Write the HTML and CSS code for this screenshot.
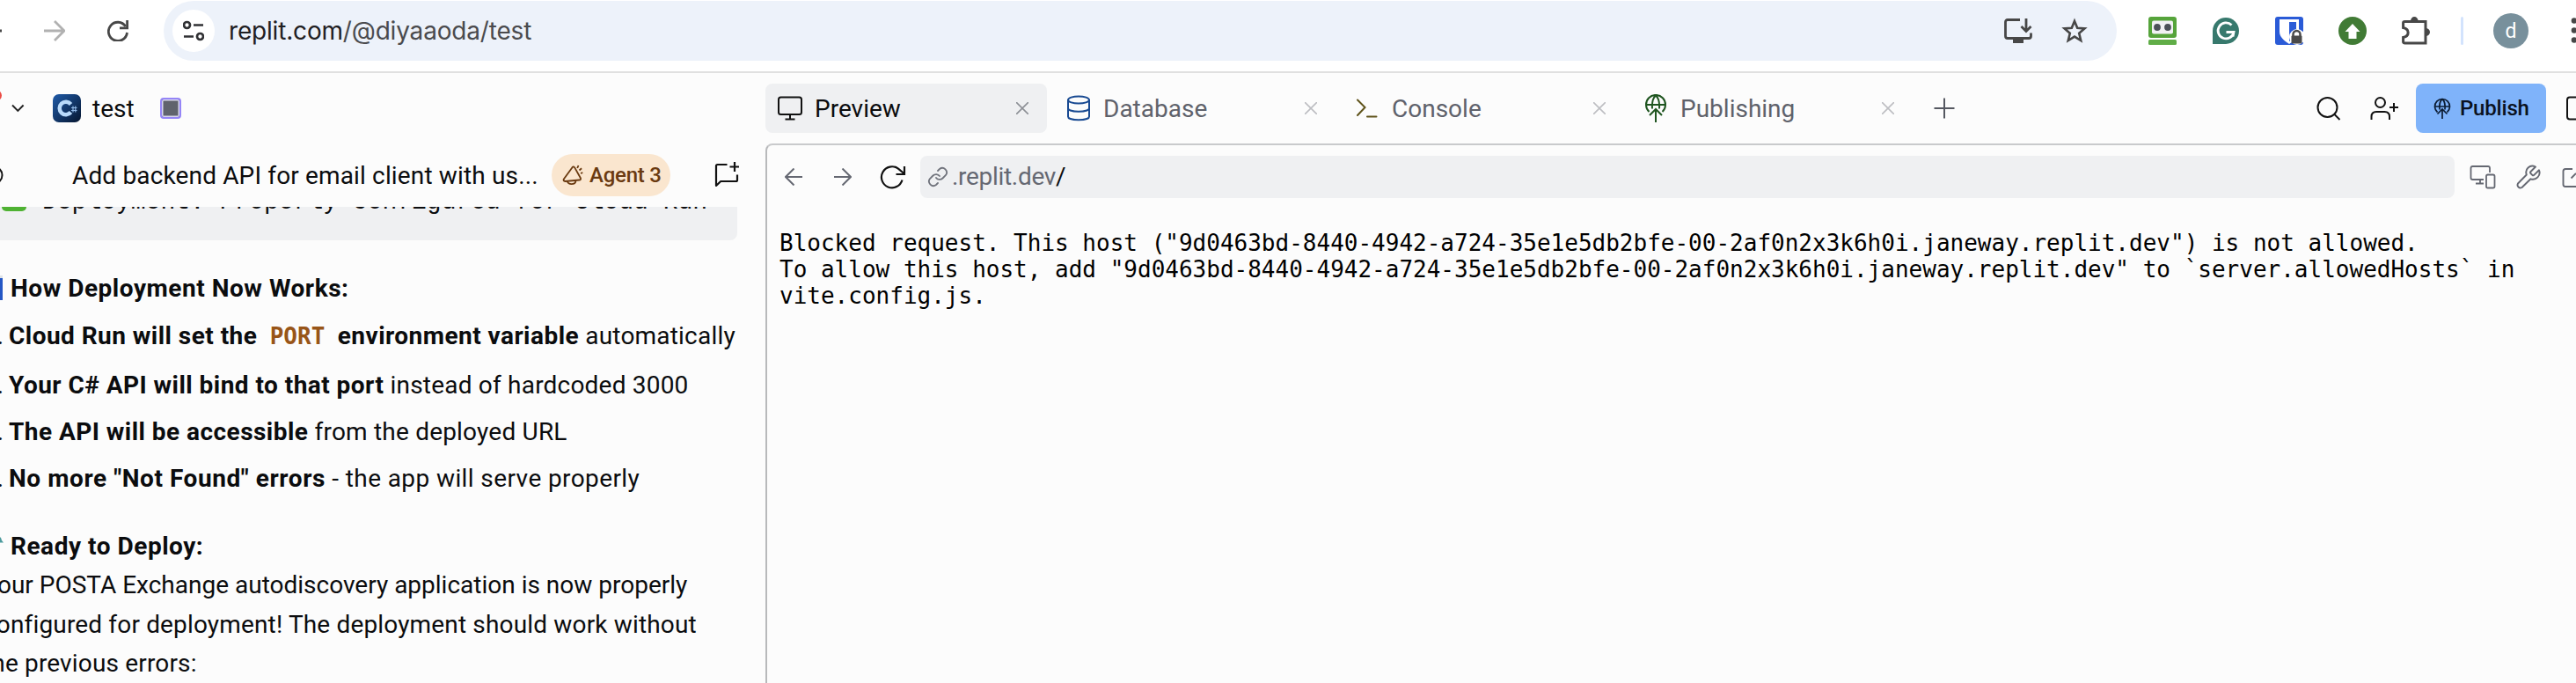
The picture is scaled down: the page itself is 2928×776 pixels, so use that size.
FILE: index.html
```html
<!DOCTYPE html>
<html lang="en">
<head>
<meta charset="utf-8">
<title>test - Replit</title>
<link rel="stylesheet" href="styles.css">
</head>
<body>
<header class="browser">
  <svg class="back-stub" width="3" height="24" viewBox="0 0 3 24"><path d="M0 12h2" stroke="#474747" stroke-width="3"/></svg>
  <svg class="forward" width="24" height="24" viewBox="0 0 24 24"><path d="M0 12h22M12 1l11 11-11 11" fill="none" stroke="#b1b1b1" stroke-width="2.8"/></svg>
  <svg class="reload" width="24" height="24" viewBox="0 0 24 24"><path d="M20.8 7A10.600 10.600 0 1 0 22.500 14" fill="none" stroke="#474747" stroke-width="2.8"/><path d="M22.600 0v8.800H14" fill="none" stroke="#474747" stroke-width="2.800"/></svg>
  <div class="omnibox">
    <span class="site-info"><svg width="24" height="24" viewBox="0 0 24 24" fill="none" stroke="#303134" stroke-width="2.7"><circle cx="4.500" cy="5.500" r="3.500"/><path d="M12 5.500h11M1 18.500h11"/><circle cx="19.500" cy="18.500" r="3.500"/></svg></span>
    <span class="address"><b>replit.com</b>/@diyaaoda/test</span>
    <svg class="install" width="32" height="28" viewBox="0 0 32 28" fill="none" stroke="#474747" stroke-width="2.800"><path d="M18 1.500H4Q1.500 1.500 1.500 4V20Q1.500 22.500 4 22.500H28Q30.500 22.500 30.500 20V16.500"/><path d="M25 0v14M19.500 9l5.500 5.500L30.500 9"/><path d="M10 22h12v6H10z" fill="#474747" stroke="none"/></svg>
    <svg width="30" height="30" viewBox="0 0 30 30"><path d="M15 4l3.200 7.700 8.300.7-6.300 5.400 2 8.200-7.200-4.400L7.800 26l2-8.200-6.300-5.400 8.300-.7z" fill="none" stroke="#474747" stroke-width="2.600"/></svg>
  </div>
  <div class="extensions">
    <svg width="32" height="32" viewBox="0 0 32 32"><rect width="32" height="24" rx="3" fill="#56a43b"/><rect x="4" y="4.500" width="24" height="15" rx="2" fill="#f1f1f4"/><circle cx="10" cy="12" r="3.900" fill="#4b5058"/><circle cx="22" cy="12" r="3.900" fill="#4b5058"/><rect y="26" width="32" height="6" rx="1.500" fill="#60ad47"/></svg>
    <svg width="32" height="32" viewBox="0 0 32 32"><path d="M16 1a15 15 0 1 1 0 30H1V16A15 15 0 0 1 16 1z" fill="#37796d"/><path d="M22.500 9.500A9 9 0 1 0 25 17.500H16.500M25 17.500l-1 5" fill="none" stroke="#fff" stroke-width="2.800"/></svg>
    <svg width="32" height="32" viewBox="0 0 32 32"><rect width="32" height="32" rx="3" fill="#2a5bd7"/><path d="M5 3h22v14c0 6-5 10-11 14C10 27 5 23 5 17z" fill="#fff"/><path d="M16 6h8v15c-2 3-5 5-8 7z" fill="#2a5bd7"/><circle cx="25" cy="23" r="9" fill="#fff"/><path d="M20.500 22v-2a4 4 0 0 1 8 0v2" fill="none" stroke="#4a4a4a" stroke-width="2.500"/><rect x="18.500" y="21.500" width="12" height="9" rx="1" fill="#4a4a4a"/></svg>
    <svg width="32" height="32" viewBox="0 0 32 32"><circle cx="16" cy="16" r="16" fill="#417b35"/><path d="M16 8l8.500 9H20.500v8h-9v-8h-4z" fill="#fff"/></svg>
    <svg width="32" height="34" viewBox="0 0 32 34"><path d="M3.500 6.500H27V31H3.500Q1.600 31 1.600 29.500V24.500C9 23 9 15 1.600 13.500V8Q1.600 6.500 3.500 6.500z" fill="none" stroke="#474747" stroke-width="3"/><path d="M10 6a4.300 5 0 0 1 8.600 0zM27 14a5 4.500 0 0 1 0 9z" fill="#474747"/></svg>
  </div>
  <span class="divider"></span>
  <span class="avatar">d</span>
  <svg class="more" width="6" height="30" viewBox="0 0 6 30" fill="#474747"><circle cx="4" cy="3.500" r="3.300"/><circle cx="4" cy="14.500" r="3.300"/><circle cx="4" cy="25.500" r="3.300"/></svg>
</header>

<div class="workspace">
  <section class="agent">
    <div class="project">
      <svg width="28" height="40" viewBox="0 0 28 40"><circle cx="-4" cy="5.500" r="6" fill="#eb4b44"/><path d="M14 16.500l6.300 6.500 6.300-6.500" fill="none" stroke="#222" stroke-width="1.900"/></svg>
      <svg class="csharp" width="32" height="32" viewBox="0 0 32 32"><defs><linearGradient id="cs" x1="0" y1="0" x2="1" y2="1"><stop stop-color="#1f5ba9"/><stop offset="1" stop-color="#06162f"/></linearGradient></defs><rect width="32" height="32" rx="7" fill="url(#cs)"/><path d="M20.500 11.500a7.200 7.200 0 1 0 0 9" fill="none" stroke="#b9dafb" stroke-width="4.500"/><path d="M23 13.500v7M25.800 13.500v7M21 15.500h6.500M21 18.500h6.500" stroke="#8fb9e8" stroke-width="1.200"/></svg>
      <span class="project-name">test</span>
      <span class="run-state"></span>
    </div>
    <div class="thread">
      <svg width="4" height="24" viewBox="0 0 4 24"><circle cx="-7" cy="12" r="9.500" fill="none" stroke="#111" stroke-width="2"/></svg>
      <span class="thread-title">Add backend API for email client with us...</span>
      <span class="badge"><svg width="24" height="24" viewBox="0 0 24 24" fill="none" stroke="#6a3a10" stroke-width="1.800" stroke-linejoin="round"><path d="M11.500 3.200Q13 1.500 14.200 3.400L21 15.500Q21.500 17.500 19.500 17.500L3.500 19Q.800 18.500 1.800 16.500z"/><path d="M6 19c0 4 9 4.500 9.500-.7"/><path d="M17.200 4l1.300-3M19.500 6.500l2.600-2.200M21 10l2.300-.8"/></svg>Agent 3</span>
      <svg class="chat-new" width="28" height="30" viewBox="0 0 28 30" fill="none" stroke="#111" stroke-width="2.200" stroke-linejoin="round"><path d="M14.500 4H3.500Q2 4 2 5.500V28l5.200-5H24.500Q26 23 26 21.500V15.500"/><path d="M23 1v11M17.500 6.500h11"/></svg>
    </div>
    <div class="messages">
      <div class="code-block"><svg width="28" height="28" viewBox="0 0 28 28"><rect width="28" height="28" rx="5" fill="#4fb233"/><path d="M7 14l5 6 9-13" fill="none" stroke="#fff" stroke-width="3"/></svg><code>Deployment: Properly configured for Cloud Run</code></div>
      <h2 class="heading"><svg width="3" height="30" viewBox="0 0 3 30"><rect width="3" height="4" fill="#dfe3e8"/><rect y="3" width="3" height="25" fill="#2457c5"/></svg>How Deployment Now Works:</h2>
      <ol class="steps">
        <li><i>1.</i><b>Cloud Run will set the <code>PORT</code> environment variable</b> automatically</li>
        <li><i>2.</i><b>Your C# API will bind to that port</b> instead of hardcoded 3000</li>
        <li><i>3.</i><b>The API will be accessible</b> from the deployed URL</li>
        <li class="wide"><i>4.</i><b>No more "Not Found" errors</b> - the app will serve properly</li>
      </ol>
      <h2 class="heading ready"><svg width="4" height="30" viewBox="0 0 4 30"><path d="M0 4Q1.500 5 2 8l2 2.500H0z" fill="#4b9a9c"/></svg>Ready to Deploy:</h2>
      <p class="reply">Your POSTA Exchange autodiscovery application is now properly<br><span>configured for deployment! The deployment should work without</span><br><span>the previous errors:</span></p>
    </div>
  </section>

  <section class="main">
    <nav class="tabs">
      <div class="tab active"><svg width="32" height="32" viewBox="0 0 32 32" fill="none" stroke="#111" stroke-width="2"><rect x="3" y="3.500" width="26" height="19.500" rx="2.500"/><path d="M16 23v5.500M10.500 28.500h11"/></svg><span>Preview</span><svg class="close" width="14" height="14" viewBox="0 0 14 14"><path d="M0 0l14 14M14 0L0 14"/></svg></div>
      <div class="tab"><svg width="32" height="32" viewBox="0 0 32 32" fill="none" stroke="#194a92" stroke-width="2"><ellipse cx="16" cy="6.500" rx="12" ry="4"/><path d="M4 6.500v19c0 5 24 5 24 0v-19M4 16c0 5 24 5 24 0"/></svg><span>Database</span><svg class="close" width="14" height="14" viewBox="0 0 14 14"><path d="M0 0l14 14M14 0L0 14"/></svg></div>
      <div class="tab"><svg width="32" height="32" viewBox="0 0 32 32" fill="none" stroke="#5f531a" stroke-width="2" stroke-linecap="round"><path d="M5 6.500l8.500 8.500L5 24M16 25.500h10.500"/></svg><span>Console</span><svg class="close" width="14" height="14" viewBox="0 0 14 14"><path d="M0 0l14 14M14 0L0 14"/></svg></div>
      <div class="tab"><svg width="32" height="32" viewBox="0 0 32 32" fill="none" stroke="#1f5520" stroke-width="2"><path d="M8.500 20A11 11 0 1 1 23.500 20M5 12h22M12 16.500C11.500 9 13 4 16 1.500c3 2.500 4.500 7.500 4 15M16 32V17M9 24l7-7 7 7"/></svg><span>Publishing</span><svg class="close" width="14" height="14" viewBox="0 0 14 14"><path d="M0 0l14 14M14 0L0 14"/></svg></div>
      <svg class="add-tab" width="24" height="24" viewBox="0 0 24 24"><path d="M12 .500v23M.500 12h23" stroke="#555861" stroke-width="2"/></svg>
      <div class="actions">
        <svg width="28" height="28" viewBox="0 0 28 28" fill="none" stroke="#111" stroke-width="2"><circle cx="12.500" cy="13" r="11"/><path d="M20 20.500l6.500 6.500"/></svg>
        <svg width="32" height="28" viewBox="0 0 32 28" fill="none" stroke="#111" stroke-width="2"><circle cx="11.500" cy="7.500" r="5.500"/><path d="M1.500 27v-3.500q0-5.500 5.500-5.500h9.500q5.500 0 5.500 5.500V27M27 8v10M22 13h10"/></svg>
        <button class="publish"><svg width="20" height="24" viewBox="0 0 20 24" fill="none" stroke="#0b1c33" stroke-width="1.700"><path d="M4.500 16.500A8.500 8.500 0 1 1 15.500 16.500M1.500 10h17M7 13.500C6.500 8 7.500 3.500 10 1.500c2.500 2 3.500 6.500 3 12M10 24V13.500M4.500 18.500L10 13l5.500 5.500"/></svg>Publish</button>
        <svg width="12" height="28" viewBox="0 0 12 28" fill="none" stroke="#111" stroke-width="2"><path d="M12 1.500H5Q2 1.500 2 4.500v19q0 3 3 3h7"/></svg>
      </div>
    </nav>
    <div class="preview">
      <div class="toolbar">
        <svg width="20" height="20" viewBox="0 0 20 20" fill="none" stroke="#656872" stroke-width="2"><path d="M20 10H1M10.500 .500L1 10l9.500 9.500"/></svg>
        <svg class="next" width="20" height="20" viewBox="0 0 20 20" fill="none" stroke="#656872" stroke-width="2"><path d="M0 10h19M9.500 .500L19 10l-9.500 9.500"/></svg>
        <svg class="refresh" width="30" height="28" viewBox="0 0 30 28" fill="none" stroke="#111" stroke-width="2.200"><path d="M25.500 17.500A12 12 0 1 1 21 4.600L28 10.500M28 2v9h-9.500"/></svg>
        <div class="url"><svg width="24" height="24" viewBox="0 0 24 24" fill="none" stroke="#70737c" stroke-width="1.800" stroke-linecap="round"><path d="M10 13a5 5 0 0 0 7.500.500l3.500-3.500a5 5 0 0 0-7-7l-2 2M14 11a5 5 0 0 0-7.500-.500L3 14a5 5 0 0 0 7 7l2-2"/></svg><span>.replit.dev<b>/</b></span></div>
        <svg class="devices" width="30" height="28" viewBox="0 0 30 28" fill="none" stroke="#656872" stroke-width="1.800"><path d="M23 9V4Q23 2 21 2H3.500Q1.500 2 1.500 4V15Q1.500 17 3.500 17H16M12 17v4M7 21.500h9"/><rect x="19" y="11.500" width="9.500" height="15" rx="1.800"/></svg>
        <svg class="wrench" width="28" height="28" viewBox="0 0 28 28" fill="none" stroke="#656872" stroke-width="1.900" stroke-linejoin="round"><path d="M22 2.500l-5.500 5.500q-1 1 0 2l1.800 1.800q1 1 2 0L26 6.300c2.500 6-3.500 12-9.500 10L6.500 26A3.300 3.300 0 0 1 2 21.500l9.800-10C9.500 5 15.500-.500 22 2.500z"/></svg>
        <svg width="16" height="24" viewBox="0 0 16 24" fill="none" stroke="#656872" stroke-width="1.900"><path d="M12 3H4Q1.500 3 1.500 5.500V20.500Q1.500 23 4 23H16M10.500 13.500L16 8"/></svg>
      </div>
      <pre class="error">Blocked request. This host ("9d0463bd-8440-4942-a724-35e1e5db2bfe-00-2af0n2x3k6h0i.janeway.replit.dev") is not allowed.
To allow this host, add "9d0463bd-8440-4942-a724-35e1e5db2bfe-00-2af0n2x3k6h0i.janeway.replit.dev" to `server.allowedHosts` in
vite.config.js.</pre>
    </div>
  </section>
</div>
</body>
</html>
```
FILE: styles.css
```css
* { box-sizing: border-box; }
body {
  margin: 0;
  width: 2928px;
  height: 776px;
  overflow: hidden;
  background: #fcfcfc;
  color: #0b0c0e;
  font: 400 28px Roboto, sans-serif;
}
svg { display: block; flex: none; overflow: hidden; }

/* Browser toolbar */
.browser {
  display: flex;
  align-items: center;
  height: 83px;
  padding-bottom: 12px;
  background: #fff;
  border-bottom: 2px solid #e0e0e0;
}
.forward { margin-left: 47px; }
.reload { margin-left: 48px; }
.omnibox {
  display: flex;
  align-items: center;
  width: 2220px;
  height: 68px;
  margin-left: 40px;
  padding: 0 33px 0 10px;
  border-radius: 34px;
  background: #edf2fa;
}
.site-info {
  display: grid;
  place-items: center;
  width: 48px;
  height: 48px;
  border-radius: 50%;
  background: #fff;
}
.address {
  flex: 1;
  margin-left: 16px;
  color: #4a4b4e;
  font-family: Inter, sans-serif;
  letter-spacing: -0.18px;
}
.address b { font-weight: 400; color: #1f2023; }
.install { margin-right: 33px; }
.extensions { display: flex; align-items: center; gap: 40px; margin-left: 36px; }
.divider { width: 3px; height: 32px; margin-left: 35px; border-radius: 2px; background: #d3e3fd; }
.avatar {
  width: 40px;
  height: 40px;
  margin-left: 34px;
  border-radius: 50%;
  background: #78909c;
  color: #fff;
  font-size: 23px;
  line-height: 41px;
  text-align: center;
}
.more { margin-left: 48px; }

.workspace { display: flex; height: 693px; }

/* Agent column */
.agent { display: flex; flex-direction: column; width: 870px; overflow: hidden; }
.project { display: flex; align-items: center; height: 80px; }
.csharp { margin-left: 32px; }
.project-name { width: 77px; margin-left: 13px; }
.run-state {
  width: 24px;
  height: 24px;
  border: 2px solid #9585f7;
  border-radius: 4px;
  background: #60636d;
  box-shadow: inset 0 0 0 1.500px #d9d8ee;
}
.thread { display: flex; align-items: center; height: 72px; padding-bottom: 0; }
.thread-title { width: 545px; margin-left: 78px; letter-spacing: 0.15px; white-space: nowrap; }
.badge {
  display: flex;
  align-items: center;
  gap: 7px;
  width: 135px;
  height: 48px;
  padding-left: 12px;
  border-radius: 24px;
  background: #fae6cf;
  color: #6a3a10;
  font-weight: 500;
  font-size: 24px;
  letter-spacing: -0.25px;
  white-space: nowrap;
}
.chat-new { margin: -2px 0 0 50px; }
.messages { height: 541px; overflow: hidden; }
.code-block {
  display: flex;
  align-items: flex-end;
  width: 838px;
  height: 58px;
  margin-top: -20px;
  padding: 0 0 33px 2px;
  border-radius: 0 0 8px 0;
  background: #eff0f2;
}
.code-block code {
  margin: 0 0 -6px 18px;
  font: 28px/32px "Liberation Mono", monospace;
  white-space: nowrap;
}
.heading {
  display: flex;
  align-items: center;
  height: 45px;
  margin: 32px 0 0;
  font-size: 28px;
  font-weight: 700;
  letter-spacing: 0.53px;
}
.heading svg { margin-right: 9px; }
.heading.ready svg { margin-right: 8px; }
.steps { margin: 9px 0 0; padding: 0; list-style: none; line-height: 45px; }
.steps li { height: 45px; margin: 0 0 8px -19px; letter-spacing: 0.2px; white-space: nowrap; }
.steps li:first-child { margin-bottom: 11px; }
.steps li:last-child { margin-bottom: 0; }
.steps .wide { letter-spacing: 0.4px; }
.steps i { display: inline-block; width: 29px; font-style: normal; letter-spacing: 0; }
.steps b { letter-spacing: 0.46px; }
.steps .wide b { letter-spacing: 0.57px; }
.steps code {
  padding: 0 7px;
  color: #985518;
  font: 700 26px/28px "DejaVu Sans Mono", monospace;
  letter-spacing: 0;
}
.reply { margin: 0 0 0 -19px; line-height: 44.5px; white-space: nowrap; }
.reply span { letter-spacing: 0.16px; }

/* Workspace tabs */
.main { width: 2058px; }
.tabs { display: flex; align-items: center; gap: 8px; height: 80px; }
.tab {
  display: flex;
  align-items: center;
  width: 320px;
  height: 56px;
  padding: 0 21px 0 12px;
  border-radius: 8px;
  color: #5f626b;
}
.tab.active { background: #eff0f2; color: #0b0c0e; }
.tab span { flex: 1; margin-left: 12px; }
.close { stroke: #bdbec2; stroke-width: 1.600; }
.active .close { stroke: #8d9096; }
.add-tab { margin-left: 16px; }
.actions { display: flex; align-items: center; margin-left: auto; }
.actions svg:nth-child(2) { margin-left: 33px; }
.publish {
  display: flex;
  align-items: center;
  gap: 10px;
  width: 148px;
  height: 56px;
  margin: 0 22px 0 20px;
  padding: 0 0 0 20px;
  border: 0;
  border-radius: 8px;
  background: #7fb3fa;
  color: #0b1220;
  font: 500 24px Roboto, sans-serif;
  letter-spacing: -0.2px;
}

/* Preview panel */
.preview {
  height: 613px;
  border-top: 2px solid #c9cacc;
  border-left: 2px solid #b8b9bb;
  border-top-left-radius: 8px;
}
.toolbar { display: flex; align-items: center; height: 71px; padding-left: 20px; }
.next { margin-left: 36px; }
.refresh { margin-left: 32px; }
.url {
  display: flex;
  align-items: center;
  gap: 4px;
  width: 1744px;
  height: 48px;
  margin-left: 16px;
  padding-left: 8px;
  border-radius: 8px;
  background: #eff0f2;
  color: #656872;
  letter-spacing: -0.3px;
}
.url b { font-weight: 400; color: #0b0c0e; }
.devices { margin-left: 17px; }
.wrench { margin: 0 24px 0 23px; }
.error {
  margin: 25px 0 0 14px;
  color: #000;
  font: 26px/30px "DejaVu Sans Mono", monospace;
}
```
